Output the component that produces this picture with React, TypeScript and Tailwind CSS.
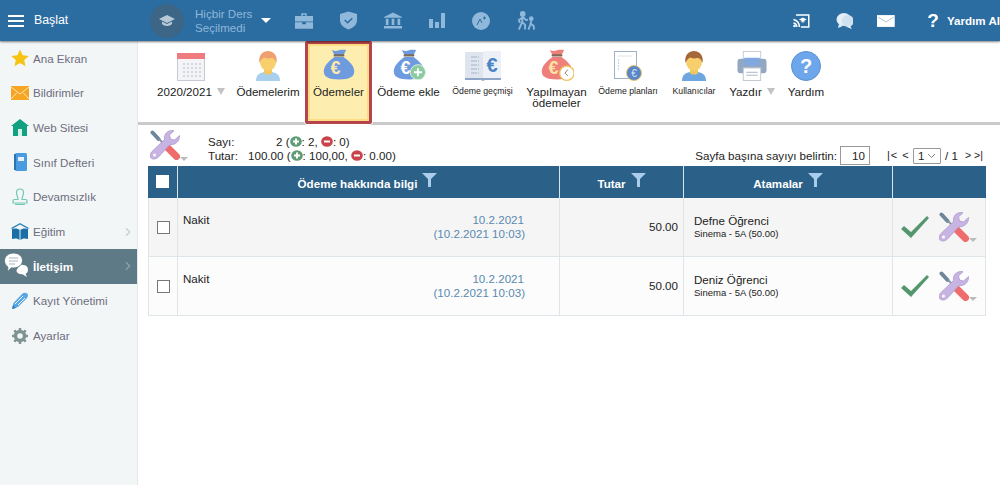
import { ChevronRight } from "lucide-react";
import type { ReactNode } from "react";

const font = { fontFamily: '"Liberation Sans", Arial, sans-serif' };

const Star = () => (
  <svg width="18" height="18" viewBox="0 0 18 18">
    <path d="M9 .5l2.600 5.700 6.200.7-4.600 4.200 1.300 6.100L9 14.100l-5.500 3.100 1.300-6.100L.2 6.900l6.200-.7z" fill="#f7c313" />
  </svg>
);
const Mail = () => (
  <svg width="18" height="14" viewBox="0 0 18 14">
    <rect width="18" height="14" fill="#f6a623" />
    <path d="M0 1l9 7 9-7M0 13l6-6.500M18 13l-6-6.500" stroke="#fde3b0" strokeWidth="1" fill="none" />
  </svg>
);
const Home = () => (
  <svg width="18" height="17" viewBox="0 0 18 17">
    <path d="M9 0l9 7h-2v10H2V7H0z" fill="#11a182" />
    <rect x="7" y="10" width="4" height="7" fill="#d8f1ea" />
  </svg>
);
const Notebook = () => (
  <svg width="13" height="18" viewBox="0 0 13 18">
    <rect x="1" width="12" height="18" rx="1.500" fill="#4a9be0" />
    <rect x="0" y="1" width="2" height="16" fill="#2a74b4" />
    <rect x="4" y="4" width="6" height="4" fill="#e6f2fb" />
  </svg>
);
const Stamp = () => (
  <svg width="16" height="17" viewBox="0 0 16 17" fill="none" stroke="#72c9b2" strokeWidth="1.200">
    <path d="M4.500 4.500a3.500 3.500 0 1 1 7 0c0 3-1.500 4-1.500 7h3.500c1 0 1.500.7 1.500 1.500V15H1v-2c0-.8.500-1.500 1.500-1.500H6c0-3-1.500-4-1.500-7z" />
    <path d="M3 16.500h10" />
  </svg>
);
const BookOpen = () => (
  <svg width="18" height="17" viewBox="0 0 18 17">
    <path d="M9 0l9 5-1 1-8-4.500L1 6 0 5z" fill="#2f83b9" />
    <path d="M1 6c3-1 6-.5 8 1 2-1.500 5-2 8-1v10c-3-1-6-.5-8 1-2-1.500-5-2-8-1z" fill="#1c6fa6" />
    <path d="M9 7v10" stroke="#dcedf7" />
  </svg>
);
const Chats = () => (
  <svg width="25" height="26" viewBox="0 0 25 26">
    <path d="M15 13a5.500 5 0 0 1 9 4c0 2-1.200 3.200-2.500 3.800l1.500 3.200-4.500-2.700c-3.500 0-6-1.300-6-4z" fill="#fff" />
    <path d="M9.500 0C14.700 0 18.500 3.300 18.500 7.500S14.700 15 9.500 15c-.8 0-1.500 0-2.200-.2L3.500 19l.4-5C1.500 12.500.5 10 .5 7.500.5 3.300 4.500 0 9.500 0z" fill="#fff" stroke="#5f7a87" />
    <path d="M5 5h9M5 8h9M5 11h6" stroke="#a9b8bf" strokeWidth="1.200" />
  </svg>
);
const Pen = () => (
  <svg width="18" height="18" viewBox="0 0 18 18">
    <path d="M1 17l1.500-6L11 2c2-2 6-1.500 6 1.500 0 1-.5 2-1.500 3L7 15z" fill="#58a6e3" />
    <path d="M4 12l8-8M7 13l7-7" stroke="#e8f3fb" strokeWidth="1" />
    <path d="M1 17l1-4 3 3z" fill="#2f7fc0" />
  </svg>
);
const Gear = () => (
  <svg width="16" height="16" viewBox="0 0 16 16">
    <circle cx="8" cy="8" r="4.500" fill="none" stroke="#7f9393" strokeWidth="3.500" />
    <path d="M8 0v3M8 13v3M0 8h3M13 8h3M2.300 2.300l2 2M11.700 11.700l2 2M13.700 2.300l-2 2M4.300 11.700l-2 2" stroke="#7f9393" strokeWidth="2.500" />
  </svg>
);

const Bag = ({ fill, badge, euro = "#fff", size = 34 }: { fill: string; badge?: ReactNode; euro?: string; size?: number }) => (
  <svg width={size} height={(size * 36) / 38} viewBox="0 0 38 36">
    <path d="M11 1c3 1.500 5 1.500 8 .5s5-.5 8-.5l-3 6H14z" fill={fill} />
    <rect x="13" y="6" width="12" height="2.500" rx="1" fill="#7f6a58" />
    <path d="M14 9h10c6 4 12 10 12 16 0 7-6 9-17 9S2 32 2 25c0-6 6-12 12-16z" fill={fill} />
    <text x="15" y="28" fontSize="20" fontWeight="700" fill={euro} textAnchor="middle" style={font}>€</text>
    {badge}
  </svg>
);

const PlusBadge = () => (
  <g>
    <circle cx="29" cy="26" r="8.500" fill="#8ccba0" stroke="#e6f3ea" />
    <path d="M24.500 26h9M29 21.500v9" stroke="#fff" strokeWidth="2" />
  </g>
);
const ClockBadge = () => (
  <g>
    <circle cx="30" cy="27" r="8" fill="#fff" stroke="#ecc25a" strokeWidth="1.500" />
    <path d="M31 23l-3 4 3 3" stroke="#777" strokeWidth="1" fill="none" />
  </g>
);

const CalendarIcon = () => (
  <svg width="28" height="28" viewBox="0 0 28 28">
    <rect x=".5" y=".5" width="27" height="27" fill="#f4f4f6" stroke="#c6cad4" />
    <rect width="28" height="6" fill="#ef7a7f" />
    {[10, 14, 18, 22].map((y) =>
      [6, 10, 14, 18, 22].map((x) => <rect key={`${x}-${y}`} x={x} y={y} width="2" height="2" fill="#d3d7e3" />)
    )}
  </svg>
);
const Person = ({ hair, shirt }: { hair: string; shirt: string }) => (
  <svg width="26" height="30" viewBox="0 0 26 30">
    <path d="M1 30c0-6 3-8 8-9h8c5 1 8 3 8 9z" fill={shirt} />
    <path d="M9 18h8v4c-1 2-7 2-8 0z" fill="#f2c75f" />
    <ellipse cx="13" cy="11" rx="8" ry="9" fill="#f7cf6d" />
    <path d="M4.500 12C3 4 8 0 13 0s10 4 8.500 12C20 8 18 6.500 16 7c-3 1-6 0-7-.5-2 1-3.500 3-4.500 5.500z" fill={hair} />
  </svg>
);
const BookEuro = () => (
  <svg width="36" height="30" viewBox="0 0 36 30">
    <rect x="0" y="1" width="18" height="26" fill="#dfe5ef" />
    <rect x="18" y="0" width="18" height="27" fill="#edf1f7" />
    <path d="M0 27h36v2H20l-2 1-2-1H0z" fill="#8ea6c8" />
    <path d="M6 6h8M6 10h8M6 14h8M6 18h8M6 22h8" stroke="#a8b3c4" strokeWidth="1" strokeDasharray="6 1" />
    <text x="27" y="21" fontSize="20" fontWeight="700" fill="#4a86c5" textAnchor="middle" style={font}>€</text>
  </svg>
);
const PlanIcon = () => (
  <svg width="28" height="30" viewBox="0 0 28 30">
    <rect x=".5" y=".5" width="22" height="27" fill="#fff" stroke="#9fb2c8" />
    <path d="M4 5h14" stroke="#dde3ea" />
    <path d="M4 9h1M4 12h1M4 15h1M4 18h1" stroke="#9aa6b4" />
    <circle cx="20" cy="22" r="7.500" fill="#5a86c8" stroke="#e7c56f" />
    <text x="20" y="26" fontSize="10" fill="#dbe7f7" textAnchor="middle" style={font}>€</text>
  </svg>
);
const Printer = () => (
  <svg width="30" height="30" viewBox="0 0 30 31">
    <rect x="6" y="0.5" width="18" height="14" fill="#fff" stroke="#c5ccd6" />
    <rect x="0" y="8" width="30" height="15" rx="3" fill="#93a7c1" />
    <rect x="7" y="7" width="16" height="8" fill="#7fa8e0" />
    <rect x="6" y="17.500" width="18" height="13" fill="#fff" stroke="#bfc8d4" />
    <path d="M9 22h12M9 25h12" stroke="#a9b5c4" />
  </svg>
);
const HelpIcon = () => (
  <svg width="30" height="30" viewBox="0 0 30 30">
    <circle cx="15" cy="15" r="14.500" fill="#6ea6ec" stroke="#5b8fd2" />
    <text x="15" y="22" fontSize="20" fontWeight="700" fill="#fff" textAnchor="middle" style={font}>?</text>
  </svg>
);
const Tools = () => (
  <svg width="30" height="30" viewBox="0 0 30 30">
    <path d="M2.500 2.500l6 6.500" stroke="#6f8598" strokeWidth="4" strokeLinecap="round" />
    <path d="M9 9l6 6" stroke="#8a99a8" strokeWidth="2" />
    <path d="M18 18l8.500 8.500" stroke="#ee6c6c" strokeWidth="7" strokeLinecap="round" />
    <path d="M29.500 5.500C30 11 25 15.500 20 14.500L8.500 27C6 29.500 2.500 29.500 1 28S0 23 2.500 21L14.500 9.500C13.500 4 18-.5 24 .7L19.500 5l1 4 4 1z" fill="#c7b4e2" stroke="#a892cc" strokeWidth=".7" />
    <circle cx="4.500" cy="25" r="1.500" fill="#fff" />
  </svg>
);
const DownTri = () => <span className="inline-block w-0 h-0 border-x-[4px] border-x-transparent border-t-[7px] border-t-[#c3c3c3]" />;
const SmallTri = () => <span className="inline-block w-0 h-0 border-x-[4px] border-x-transparent border-t-[4px] border-t-[#bbbbbb]" />;
const Funnel = () => (
  <svg width="15" height="14" viewBox="0 0 15 14" className="-mt-[7px]">
    <path d="M0 0h15L9 6v8H6V6z" fill="#a9cdea" />
  </svg>
);
const Check = () => (
  <svg width="30" height="24" viewBox="0 0 30 24">
    <path d="M1 14l3-3 7 6L27 1l2 2-18 20z" fill="#55966f" />
  </svg>
);
const StatusDot = ({ plus }: { plus?: boolean }) => (
  <svg width="12" height="11" viewBox="0 0 12 11" className="inline-block align-[-1px]">
    <ellipse cx="6" cy="5.500" rx="5.800" ry="5.300" fill={plus ? "#5d9c74" : "#c8444a"} />
    <path d={plus ? "M3 5.500h6M6 2.500v6" : "M3 5.500h6"} stroke="#fff" strokeWidth="2" />
  </svg>
);

const nav = [
  { label: "Ana Ekran", icon: <Star /> },
  { label: "Bildirimler", icon: <Mail /> },
  { label: "Web Sitesi", icon: <Home /> },
  { label: "Sınıf Defteri", icon: <Notebook /> },
  { label: "Devamsızlık", icon: <Stamp /> },
  { label: "Eğitim", icon: <BookOpen />, more: true },
  { label: "İletişim", icon: <Chats />, more: true, active: true },
  { label: "Kayıt Yönetimi", icon: <Pen /> },
  { label: "Ayarlar", icon: <Gear /> },
];

const Sidebar = () => (
  <aside className="w-[138px] shrink-0 bg-[#f3f6f6] border-r border-[#e4e8e8]">
    {nav.map((n) => (
      <div
        key={n.label}
        className={`h-[34.67px] flex items-center text-[11.600px] ${n.active ? "bg-[#5f7a87] text-white font-bold pl-[4px]" : "text-[#6d6d80] pl-[7px]"}`}
      >
        <span className={`${n.active ? "w-[29px] justify-start" : "w-[26px] justify-center"} flex`}>{n.icon}</span>
        <span className="flex-1">{n.label}</span>
        {n.more && <ChevronRight size={14} className={`mr-[2px] ${n.active ? "text-[#8fa3ad]" : "text-[#c5cccc]"}`} />}
      </div>
    ))}
  </aside>
);

const tools: { w: string; icon: ReactNode; label: string; small?: boolean; arrow?: boolean }[] = [
  { w: "w-[82px]", icon: <CalendarIcon />, label: "2020/2021", arrow: true },
  { w: "w-[72px]", icon: <Person hair="#f0a070" shirt="#a8d0ee" />, label: "Ödemelerim" },
];
const tools2: typeof tools = [
  { w: "w-[71px]", icon: <Bag fill="#6e9ade" badge={<PlusBadge />} />, label: "Ödeme ekle" },
  { w: "w-[77px]", icon: <BookEuro />, label: "Ödeme geçmişi", small: true },
  { w: "w-[71px]", icon: <Bag fill="#ef7f7a" badge={<ClockBadge />} euro="#fbe3a0" />, label: "Yapılmayan ödemeler" },
  { w: "w-[72px]", icon: <PlanIcon />, label: "Ödeme planları", small: true },
  { w: "w-[60px]", icon: <Person hair="#a5673a" shirt="#6ea6e0" />, label: "Kullanıcılar", small: true },
  { w: "w-[56px]", icon: <Printer />, label: "Yazdır", arrow: true },
  { w: "w-[52px]", icon: <HelpIcon />, label: "Yardım" },
];

const ToolItem = ({ t }: { t: (typeof tools)[number] }) => (
  <div className={`${t.w} shrink-0 flex flex-col items-center pt-[10px]`}>
    <div className="h-[30px] flex items-end justify-center">{t.icon}</div>
    <div
      className={`mt-[4px] flex items-center justify-center gap-[5px] text-center text-[#222] ${t.small ? "text-[8.700px] leading-[13px]" : "text-[11.600px] leading-[11px] pt-[1px]"}`}
    >
      <span>{t.label}</span>
      {t.arrow && <DownTri />}
    </div>
  </div>
);

const Toolbar = () => (
  <div className="h-[84px] flex pl-[12px] border-b-[3px] border-[#c9c9c9] bg-white">
    {tools.map((t) => (
      <ToolItem key={t.label} t={t} />
    ))}
    <div className="w-[69px] h-[85px] shrink-0 bg-white p-[1px] rounded-[4px] relative -top-[1px]">
      <div className="h-full border-[3px] border-[#b5444c] rounded-[2px] bg-[#fdeeb0] flex flex-col items-center pt-[7px] text-[11.600px] text-[#222] shadow-[inset_0_0_0_2px_#fbdc80]">
        <div className="h-[30px] flex items-end">
          <Bag fill="#6e9ade" euro="#fde9a8" />
        </div>
        <div className="mt-[4px] leading-[11px] pt-[1px]">Ödemeler</div>
      </div>
    </div>
    {tools2.map((t) => (
      <ToolItem key={t.label} t={t} />
    ))}
  </div>
);

const Header = () => (
  <header className="h-[41px] bg-[#2b6ca1] flex items-center shadow-[0_1px_2px_rgba(0,0,0,0.5)] relative z-10 overflow-hidden">
    <div className="w-[34px] pl-[8px] flex flex-col gap-[3px] shrink-0">
      <span className="h-[2px] w-[16px] bg-white" />
      <span className="h-[2px] w-[16px] bg-white" />
      <span className="h-[2px] w-[16px] bg-white" />
    </div>
    <span className="w-[116px] text-[12.300px] text-white">Başlat</span>
    <div className="w-[34px] h-[34px] rounded-full bg-[#3c6586] flex items-center justify-center shrink-0">
      <svg width="16" height="12" viewBox="0 0 16 12">
        <path d="M8 0l8 4-8 4-8-4z" fill="#b7c8d6" />
        <path d="M3 6.500V9c2 2.500 8 2.500 10 0V6.500L8 9z" fill="#b7c8d6" />
      </svg>
    </div>
    <div className="ml-[11px] w-[59px] text-[11.600px] leading-[14px] text-[#8fb8da] whitespace-nowrap">
      <div>Hiçbir Ders</div>
      <div>Seçilmedi</div>
    </div>
    <span className="ml-[7px] inline-block w-0 h-0 border-x-[5px] border-x-transparent border-t-[5px] border-t-white shrink-0" />
    <div className="ml-[24px] flex items-center gap-[27px]">
      <svg width="18" height="16" viewBox="0 0 20 17" fill="#8fb8da">
        <path d="M7 0h6v3h7v6H0V3h7zM8.500 1.500V3h3V1.500zM0 10h8v2h4v-2h8v7H0z" />
      </svg>
      <svg width="17" height="19" viewBox="0 0 18 19" fill="#8fb8da">
        <path d="M9 0l9 2.500V9c0 5-4 8.500-9 10C4 17.500 0 14 0 9V2.500z" />
        <path d="M5 9l3 3 5-5" stroke="#2b6ca1" strokeWidth="1.500" fill="none" />
      </svg>
      <svg width="18" height="17" viewBox="0 0 20 18" fill="#8fb8da">
        <path d="M10 0l10 5v1H0V5zM2 7h3v7H2zM8.500 7h3v7h-3zM15 7h3v7h-3zM0 15h20v3H0z" />
      </svg>
      <svg width="16" height="15" viewBox="0 0 16 15" fill="#8fb8da">
        <path d="M0 6h4v9H0zM6 9h4v6H6zM12 0h4v15h-4z" />
      </svg>
      <svg width="18" height="18" viewBox="0 0 18 18">
        <circle cx="9" cy="9" r="9" fill="#8fb8da" />
        <path d="M5 13l3-6 2 4M11 6h3M12.500 4.500v3" stroke="#2b6ca1" strokeWidth="1" fill="none" />
      </svg>
      <svg width="19" height="20" viewBox="0 0 20 20" fill="none" stroke="#8fb8da" strokeWidth="2">
        <circle cx="6" cy="2.500" r="2" fill="#8fb8da" />
        <circle cx="15" cy="7.500" r="1.500" fill="#8fb8da" />
        <path d="M6 5l-.5 6 3 3v5M5.500 11L2 19M6 6l-4 3 1 3M6.500 6l3 3 2-.5M15 10l-1 4-2 5M14.500 13l3 2 .5 4" />
      </svg>
    </div>
    <div className="ml-auto flex items-center text-white shrink-0 w-[207px]">
      <svg width="17" height="14" viewBox="0 0 17 14">
        <path d="M3 1h13v12H8" stroke="#fff" strokeWidth="1.500" fill="none" />
        <path d="M.5 5.500A8 8 0 0 1 6.500 13M.5 9A4.500 4.500 0 0 1 4 13" stroke="#fff" strokeWidth="1.500" fill="none" />
        <circle cx="1.500" cy="12" r="1.300" fill="#fff" />
        <path d="M10 3.500l4 2-4 2-4-2zM7.500 7.500c1.500 1.500 3.500 1.500 5 0" fill="#fff" />
      </svg>
      <svg width="18" height="16" viewBox="0 0 18 16" className="ml-[26px]" fill="#e4eef6">
        <ellipse cx="8" cy="6.500" rx="7.500" ry="6.500" />
        <ellipse cx="12" cy="8" rx="6" ry="6" fill="#cfe0ee" />
        <path d="M3 11l-1 4 5-2zM14 12l2 4-5-2z" />
      </svg>
      <svg width="18" height="12" viewBox="0 0 18 12" className="ml-[24px]">
        <rect width="18" height="12" fill="#fff" />
        <path d="M1 2l8 5 8-5" stroke="#a9c4da" fill="none" />
      </svg>
      <span className="ml-[32px] w-[20px] text-[19px] font-bold leading-none">?</span>
      <span className="text-[11.600px] font-bold whitespace-nowrap">Yardım Al</span>
    </div>
  </header>
);

const CheckBox = ({ head }: { head?: boolean }) => (
  <span className={`block w-[13px] h-[13px] border ${head ? "bg-white border-white -mt-[2px]" : "bg-white border-[#777]"}`} />
);

const rows = [
  { name: "Defne Öğrenci", bg: "bg-[#f5f5f5]" },
  { name: "Deniz Öğrenci", bg: "bg-[#fcfcfc]" },
];
const cols = "grid grid-cols-[30px_382px_124px_209px_93px]";

const Table = () => (
  <div className="w-[838px]">
    <div className={`${cols} h-[32px] bg-[#2b6088] text-white text-[11.600px] font-bold divide-x divide-[#d8e3ea]`}>
      <div className="flex items-center justify-center">
        <CheckBox head />
      </div>
      <div className="flex items-center justify-center gap-[5px] pt-[3px] pr-[2px]">
        Ödeme hakkında bilgi <Funnel />
      </div>
      <div className="flex items-center justify-center gap-[5px] pt-[3px]">
        Tutar <Funnel />
      </div>
      <div className="flex items-center justify-center gap-[5px] pt-[3px]">
        Atamalar <Funnel />
      </div>
      <div />
    </div>
    {rows.map((r) => (
      <div key={r.name} className={`${cols} ${r.bg} h-[59px] text-[11.600px] text-[#222] divide-x divide-[#dfe6ea] border-b border-[#dfe6ea]`}>
        <div className="flex items-center justify-center border-l border-[#dfe6ea]">
          <CheckBox />
        </div>
        <div className="flex justify-between pl-[5px] pr-[34px] pt-[15px] leading-[14px]">
          <span>Nakit</span>
          <span className="text-right text-[#5a8ab0]">
            <span className="pr-[1px]">10.2.2021</span>
            <br />
            (10.2.2021 10:03)
          </span>
        </div>
        <div className="flex items-center justify-end pr-[5px]">50.00</div>
        <div className="pl-[10px] pt-[15px]">
          <div className="leading-[16px]">{r.name}</div>
          <div className="text-[9.500px] leading-[10px]">Sinema - 5A (50.00)</div>
        </div>
        <div className="flex items-center pl-[7px] gap-[9px] border-r border-[#dfe6ea]">
          <Check />
          <span className="flex items-end">
            <Tools />
            <span className="flex">
              <SmallTri />
            </span>
          </span>
        </div>
      </div>
    ))}
  </div>
);

export default function App() {
  return (
    <div className="w-[1000px] h-[485px] overflow-hidden flex flex-col bg-white" style={font}>
      <Header />
      <div className="flex flex-1 min-h-0">
        <Sidebar />
        <main className="flex-1 min-w-0">
          <Toolbar />
          <div className="pl-[10px] pr-[14px] pt-[4px]">
            <div className="h-[37px] flex text-[11.600px] text-[#222] w-[838px]">
              <div className="w-[60px] pl-[2px] pt-[1px] flex items-start">
                <Tools />
                <span className="mt-[27px] flex">
                  <SmallTri />
                </span>
              </div>
              <div className="grid grid-cols-[40px_auto] pt-[6px] leading-[13.500px] h-fit">
                <span>Sayı:</span>
                <span>
                  <span className="inline-block w-[28px]" />2 (<StatusDot plus />: 2, <StatusDot />: 0)
                </span>
                <span>Tutar:</span>
                <span>
                  100.00 (<StatusDot plus />: 100,00, <StatusDot />: 0.00)
                </span>
              </div>
              <div className="ml-auto self-end flex items-center h-[19px] mb-[1px] pr-[1px]">
                <span>Sayfa başına sayıyı belirtin:</span>
                <span className="ml-[3px] w-[30px] h-[19px] border border-[#999] text-right pr-[4px] leading-[17px]">10</span>
                <span className="ml-[17px] w-[26px] text-[11px] tracking-[1px] whitespace-nowrap">|&lt; &lt;</span>
                <span className="w-[28px] h-[16px] border border-[#999] flex items-center justify-between px-[4px] rounded-[1px]">
                  1
                  <svg width="9" height="6" viewBox="0 0 9 6" fill="none" stroke="#888">
                    <path d="M1 1l3.500 3.500L8 1" />
                  </svg>
                </span>
                <span className="ml-[4px] w-[20px] whitespace-nowrap">/ 1</span>
                <span className="w-[20px] text-[10.500px] whitespace-nowrap">&gt; &gt;|</span>
              </div>
            </div>
            <Table />
          </div>
        </main>
      </div>
    </div>
  );
}
